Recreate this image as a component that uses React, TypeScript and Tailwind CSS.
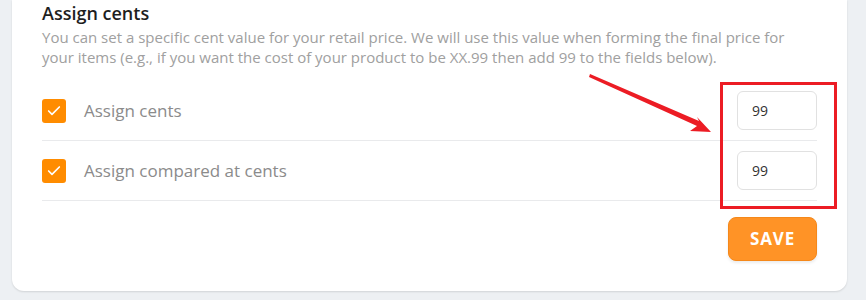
import { Check } from "lucide-react";

const rows = [
  { label: "Assign cents", value: "99" },
  { label: "Assign compared at cents", value: "99" },
];

function CentRow({ label, value }: { label: string; value: string }) {
  return (
    <div className="flex items-center h-[60px] border-b border-[#e9eaec]">
      <span className="flex items-center justify-center w-6 h-6 rounded-[3px] bg-[#ff8c00]">
        <Check className="w-4 h-4 text-white" strokeWidth={2.5} />
      </span>
      <span className="ml-[18px] text-[17px] text-[#8b8b8b]">{label}</span>
      <input
        defaultValue={value}
        className="ml-auto w-20 h-[39px] px-[14px] rounded-md border border-[#e1e1e1] text-[14px] text-[#333] outline-none"
      />
    </div>
  );
}

export default function App() {
  return (
    <div
      className="relative w-[866px] h-[300px] bg-[#edf0f3] overflow-hidden"
      style={{ fontFamily: '"Open Sans", "Liberation Sans", sans-serif' }}
    >
      <div className="ml-3 w-[835px] bg-white rounded-b-xl shadow-[0_1px_2px_rgba(0,0,0,0.12)] px-[30px] pb-[30px]">
        <h2 className="text-[18px] leading-6 font-semibold text-[#1e1e1e] pt-[1px]">Assign cents</h2>
        <p className="mt-[2px] text-[15px] leading-5 text-[#a0a0a0]">
          You can set a specific cent value for your retail price. We will use this value when forming the final price for
          your items (e.g., if you want the cost of your product to be XX.99 then add 99 to the fields below).
        </p>
        <div className="mt-[14px]">
          {rows.map((r) => (
            <CentRow key={r.label} label={r.label} value={r.value} />
          ))}
        </div>
        <div className="flex justify-end mt-4">
          <button className="w-[89px] h-[44px] rounded-lg bg-[#ff9326] border border-[#f5881a] text-white text-[17px] font-bold tracking-wider shadow-[0_2px_3px_rgba(0,0,0,0.08)]">
            SAVE
          </button>
        </div>
      </div>

      {/* annotation overlay */}
      <svg className="absolute inset-0 pointer-events-none" width="866" height="300">
        <rect x="721.5" y="83.5" width="114" height="124" fill="none" stroke="#ec1c24" strokeWidth="3" />
        <polygon points="590,74 699,121 697,117 711,132 690,131 697,126 589,77" fill="#ec1c24" />
      </svg>
    </div>
  );
}
